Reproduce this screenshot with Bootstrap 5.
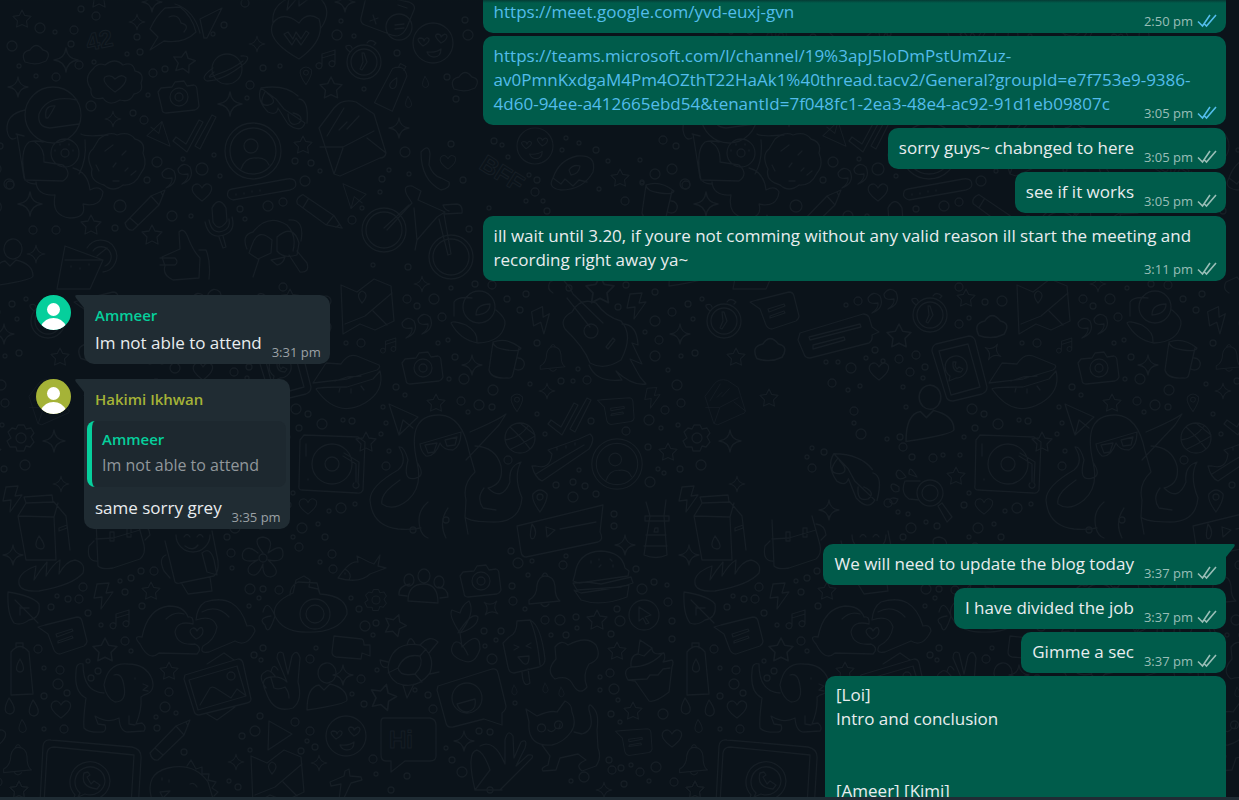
<!DOCTYPE html>
<html lang="en">
<head>
<meta charset="utf-8">
<meta name="viewport" content="width=device-width, initial-scale=1">
<title>Group chat</title>
<link href="https://cdn.jsdelivr.net/npm/bootstrap@5.3.0/dist/css/bootstrap.min.css" rel="stylesheet">
<style>
  body { background: #0b141a; color: #e9edef; font: 17px/24px "Open Sans", "Noto Sans", sans-serif; }
  .chat-window { background: #0b131a; border-bottom: 3px solid #1f2c34; }
  .chat-window::after { content: ""; position: absolute; inset: 0 0 auto; height: 3px; background: linear-gradient(rgba(11,20,26,.45), transparent); }
  .wallpaper { inset: 0; fill: none; stroke: #161e25; stroke-width: 1.3; stroke-linecap: round; stroke-linejoin: round; }
  .wallpaper text { font: 700 24px "Liberation Sans", sans-serif; stroke-width: 1; }
  .thread { padding-right: 13px; }
  .group { gap: 3px; margin-bottom: 14px; }
  .bubble { border-radius: 10px; padding: 8px 9px 9px 11px; max-width: 60vw; overflow-wrap: anywhere; }
  .sent { background: #005c4b; }
  .received { background: #202c33; }
  .wide { width: 60vw; }
  .job-list { width: 401px; padding: 7px 9px 48px 11px; }
  .clipped { padding-top: 0; border-top-left-radius: 0; border-top-right-radius: 0; }
  .bubble a { color: #53bdeb; text-decoration: none; }
  .stamp { font-size: 13px; line-height: 16px; height: 16px; margin: -11px 0 -5px; gap: 4px; color: #99beb7; white-space: nowrap; }
  .received .stamp { color: #9ba1a5; }
  .room { display: inline-block; width: 83px; }
  .received .room { width: 59px; }
  .ticks { width: 20px; height: 16px; fill: none; stroke: currentColor; stroke-width: 1.6; }
  .read { color: #53bdeb; }
  .tail { position: absolute; top: 0; width: 9px; height: 13px; }
  .received .tail { right: 100%; fill: #202c33; }
  .sent .tail { left: 100%; fill: #005c4b; }
  .tail-left { border-top-left-radius: 0; }
  .tail-right { border-top-right-radius: 0; }
  .incoming { padding-left: 36px; gap: 13px; margin-bottom: 15px; }
  .avatar { width: 35px; height: 35px; }
  .author { font-size: 15px; font-weight: 600; line-height: 24px; padding-bottom: 4px; }
  .mint { color: #06cf9c; }
  .olive { color: #a5b337; }
  .quoted { background: #1d282f; border-left: 5px solid #06cf9c; border-radius: 8px; margin: 6px -5px 9px -8px; padding: 6px 10px 10px; font-size: 16px; }
  .quoted .author { padding-bottom: 2px; }
  .quoted p { color: #91979b; }
</style>
</head>
<body>
<main class="chat-window vh-100 position-relative overflow-hidden">
  <svg class="wallpaper position-absolute w-100 h-100" aria-hidden="true">
    <defs>
      <path id="star" d="M0-10 3-4 10-3 5 2 6 9 0 6-6 9-5 2-10-3-3-4Z"/>
      <path id="spark" d="M0-10Q1-1 10 0Q1 1 0 10Q-1 1-10 0Q-1-1 0-10Z"/>
      <path id="heart" d="M0 9Q-14-1-8-7-3-10 0-4 4-11 9-6 12 0 0 9Z"/>
      <path id="drop" d="M0-8Q10 6 1 8-8 7 0-8Z"/>
      <path id="bolt" d="M-6-11 6-12 3-2 10-3-2 14-1 2-9 3Z"/>
      <path id="cloud" d="M-11 7Q-16-3-6-5 0-14 7-5 16-3 10 6Q0 11-11 7Z"/>
      <path id="note" d="M-7 6V-6L6-10V4M-7-2 6-6M-7 6a3 3 0 1 0-1 2ZM6 4a3 3 0 1 0-1 2Z"/>
      <path id="camera" d="M-17-9-6-10-3-15 6-16 9-11 16-12Q19-11 19-7L21 9Q20 12 17 13L-12 16Q-16 16-16 12L-20-5ZM10 0A9 9 0 1 1-8 0 9 9 0 1 1 10 0M5 0A4 4 0 1 1-3 0 4 4 0 1 1 5 0"/>
      <path id="bell" d="M-16 10Q-8 6-8-5-6-14 0-14 9-14 10-4 10 8 15 11L-16 14ZM-3-14q3-6 6 0M-4 14q4 5 8 0"/>
      <path id="pin" d="M0 12Q-9 0-7-6 0-14 7-6 8 0 0 12M3-3A3 3 0 1 1-3-3 3 3 0 1 1 3-3"/>
      <path id="speech" d="M-18-10 14-18Q18-18 19-14L24 6Q24 9 21 11L-3 19Q-7 19-9 15L-15-1-25-8ZM-7-1 9-6 10-4-6 2ZM-5 6 9 1 10 3-5 8Z"/>
      <path id="pencil" d="M-20 13 6-14 20-20 14-5-12 20Q-18 21-20 13M-15 8-7 15M6-14 14-5M16-18 18-14"/>
      <path id="ticks2" d="M-22 9-19 5-9 12 4-12 8-10-8 20ZM0 14 17-17 21-15 5 17Z"/>
      <path id="quote" d="M-12 8Q-5 3-6-2-16 0-16-7-11-15-4-9 1 3-12 8M4 4Q11-1 10-6 0-4 0-11 5-19 12-13 17-1 4 4"/>
      <path id="face" d="M20 0A20 20 0 1 1-20 0 20 20 0 1 1 20 0M-10 3Q-18-4-13-5-9-5-9-2-7-7-4-4-3-1-10 3M8 0Q0-7 4-9 8-9 8-6 12-11 14-7 14-3 8 0M-6 9Q3 10 8 6 8 14 1 14-4 14-6 9"/>
      <path id="profile" d="M28 0A28 28 0 1 1-28 0 28 28 0 1 1 28 0M23 0A23 23 0 1 1-23 0 23 23 0 1 1 23 0M5-5A7 7 0 1 1-9-5 7 7 0 1 1 5-5M-12 18Q-8 6 3 7 13 6 16 14"/>
      <path id="clock" d="M17 0A17 17 0 1 1-17 0 17 17 0 1 1 17 0M13 0A13 13 0 1 1-13 0 13 13 0 1 1 13 0M-2-9-1 0-4 7-2 8 3 0 0-9ZM3-19q3-5 9 0l-2 2M-14-10q-5-4-4-6 5-2 6 2"/>
      <path id="gear" d="M-3-13H3L5-9 10-10 13-5 10-1 13 4 9 9 5 8 3 13H-4L-5 9-11 9-14 3-10 0-13-6-9-10-5-9ZM5 0A5 5 0 1 1-5 0 5 5 0 1 1 5 0"/>
      <path id="mug" d="M-14-20Q0-25 14-14 13-10 0-12-14-14-14-20L-18 8Q-16 17 0 16 5 17 6 12L12-14M11-4a6 6 0 1 1-3 11"/>
      <path id="bottle" d="M-9-16Q0-27 9-16L13 26-9 27ZM-4-20V-25H3V-20M0-9Q7 3 0 4-7 3 0-9"/>
      <path id="bread" d="M-32 10Q-34-1-15-8L-17 6Q-11-4-4-12L-5 2Q2-10 9-14L8 0Q15-13 24-14 35-11 32-1 22 11-12 17-30 18-32 10Z"/>
      <path id="envelope" d="M-33-10-18-30Q-10-40 4-36L22-24 26-11 34 15Q33 20 28 20L-12 38-18 36ZM-32 9-9 9 22-7M-9 10-18 36M15 0 34 15M-25-2-8-30M-13-8-5-16M-5-9 7-22"/>
      <path id="glasses" d="M-24-20Q-29-8-17 4-8 8-7 0-2 8 3 16 16 26 20 15L-1 1-9-9ZM-20-16q-8 15 4 13 10-3-2-12M3 6q1 14 11 9 6-7-6-10M-24-20Q0-24 13-12M14-9Q24-8 22 15"/>
      <path id="map" d="M-24-22-8-15 9-28 26-21 29 14 10 23-5 17-22 27ZM-20 17 0 9 27-14M8 4 22 18M-3-4q-7-9 0-12 8 3 0 12" />
      <path id="turntable" d="M-28-29 26-27 33-22 31 26Q29 30 25 29L-30 26Q-34 26-33 21L-32-24ZM20 0A20 20 0 1 1-20 0 20 20 0 1 1 20 0M7 0A7 7 0 1 1-7 0 7 7 0 1 1 7 0M11-8 24 0 24 18M12-11 27-2 26 19a3 3 0 1 1-4 0M-26-20v12M-24 15v1"/>
      <path id="tablet" d="M-20-25 13-33Q17-33 19-29L31 18Q31 23 26 25L-3 32Q-9 32-10 27L-24-18Q-24-23-20-25M-17-18 12-25 24 18-5 26ZM11-4A11 11 0 1 0-6 7L-7 12 0 9A11 11 0 0 0 11-4M-3-7Q-4 3 5 3L7 0 3-2 1 0-1-3 0-7Z"/>
      <path id="lips" d="M-34 12-21-8-6-7Q1-18 10-15L32-6Q34-4 30-1L0 8ZM-31 18Q-30 16 0 16L26 8 33 0Q38 20 18 32-10 48-31 18M-12 10 0 6 14 5M-7 17-8 21M4 18v4M14 15l3 4"/>
      <path id="octopus" d="M-31 20Q-42-28-8-27 14-26 21 9L27 30Q14 42 18 58M-31 20Q-22 34-32 36-46 40-40 18-44 4-49 5-40 20-50 28-78 44-78 58-76 84-50 87-38 88-27 86M-31 20Q-25 45-40 58-55 70-66 62-68 54-56 44L-48 38M18 18 51-17 58-28Q50-22 22-10M27 4Q48 5 53 24 56 42 40 46 54 60 62 40 60 24 73 20 65 34 74 56 72 80 46 80 22 80 17 75L18 58M36 46Q28 56 35 66L48 68M-28 2 13-10Q13 4 5 8-5 8-8 1-13 15-22 14-27 10-28 2M-23 3-11 1-14 10-20 11ZM-3-2 9-5 7 3-1 4ZM-20 60Q-32 70-28 86-26 94-20 96M0 66q-10 14-2 30M17 75 20 92"/>
      <path id="hands" d="M-55 5Q-49-24-28-26-13-26-9-15-3-16-4-8-20-12-22 0-20 14-2 12 6 16 0 22L-38 21Q-48 30-57 12-65 3-55 5M-31-13q8-8 18-5M-1-12Q16-18 20-5 18 8 6 14 2 22 12 20L38 9Q50 16 58-1 57-8 50-6 40-40 8-30 0-25-1-12M5-20q15-8 27 5M-1 7q-10-8-3-11 3 0 4 3 5-7 6 0 0 5-7 8"/>
      <path id="dog" d="M-25-26Q-32-28-32-18-34 2-22 8-25 30-24 38-20 43-5 42-1 40-3 35L-10 34-13 26Q0 34 11 28 12 42 20 42L36 41Q39 37 34 33L28 34Q34 20 33 7L36 5Q48 2 44-11 38-26 20-26 0-28-4-5-2 8 7 12 19 12 16-4 14-18 6-15M-25-26Q-25 2-4 3M21 26v8l6 1M27-12v1M35-6l5 2-5 4 5 1"/>
      <path id="photo" d="M-32-15 21-31Q25-31 26-27L34 9Q34 12 30 13L-18 25Q-22 25-23 21L-33-11ZM-28-10 20-24 29 6-19 20ZM-17 15-7-2Q-4-4 0-1L14 8 20-1 28 5M18-14a4 4 0 1 1-8 0 4 4 0 1 1 8 0M-10-26 7-37 17-30M-10 24 0 30 18 17"/>
      <path id="burger" d="M-26 1Q-23-21 0-22 21-21 24-5L28-2 27 3-22 10-28 8ZM-28 10-14 9 0 11 30 4 32 10 20 14-24 17ZM-27 17-20 20 0 17 28 12 26 24Q0 34-20 27ZM-10-12v2M0-8l-2 2M9-14l2 2M12-8v2M-2-14v1"/>
      <path id="cupcake" d="M-22 8Q-28-2-19-5-20-17-12-18L-10-32 2-24Q2-16 14-19 16-14 13-10L22-12Q24-10 22-5L19 20Q5 31-1 29L-15 9ZM-19-5Q0-5 13-19M-12-18-6-16 2-24M-22 8-3 7 0 3 8 3 13-3 20-4"/>
      <path id="cat" d="M-34-29-23-22Q-10-28-3-26L5-37Q12-34 12-26 17-14 11-6 4 4-8 7-33 9-31-16ZM-18 7-10 18-12 27Q-20 30-17 33L-4 32 0 20 18 16 26 22Q14 27 22 33L36 28Q42 20 38 10L37-8Q39-22 35-28 28-38 29-28 36-8 22-4L14-6M-18-14a4 4 0 1 1-1 0M-1-17a4 4 0 1 1-1 0M-12-8q4 4 8-2 4 2 4-4"/>
      <path id="astronaut" d="M26-35A28 28 0 1 1-30-35 28 28 0 1 1 26-35M22-50Q-8-56-16-36-18-23-5-22L24-26M-9-32Q-11-45 0-44-3-38-7-32ZM-30-40Q-49-36-48-20-46-8-39-12M-38-16-31 28Q-28 34-19 34M-31-14-39-16M-12-8Q-20-10-26-8-36 0-30 30L8 31Q18 24 8 15L-11 12Q-10-2-20-8M-19 32Q-18 46 0 45-4 66 15 68 32 68 28 54 46 58 48 42 44 35 35 40 33 22 18 18M30-10Q32 10 24 24M26-16Q30-13 53-15M24 3A14 14 0 1 1-4 3 14 14 0 1 1 24 3M14 3A4 4 0 1 1 6 3 4 4 0 1 1 14 3M0 0v1M5-6v1M14-6v1M18 0v1"/>
      <path id="cookie" d="M-18-22Q-8-30 0-26 12-30 18-22 29-19 26-8 31 4 24 12 18 25 6 24-4 32-13 24-28 20-25 8-32-6-24-12ZM-12-10-4-16M5-6 9-10M-4 6-1 2M8 10l3-3M-18 10l-3-6M14 14l5-4M-4 20h6"/>
      <path id="bike" d="M-11 0A22 22 0 1 1-55 0 22 22 0 1 1-11 0M-15 0A18 18 0 1 1-51 0 18 18 0 1 1-15 0M56 27A22 22 0 1 1 12 27 22 22 0 1 1 56 27M52 27A18 18 0 1 1 16 27 18 18 0 1 1 52 27M-30 0-5-27-10-35Q-15-45-5-44L4-39 1-30 28-18 20-13 0 10-3-22M-33-2-8-25M0 10-2 20M22-11 31 25 34 24 27-16 45-17Q46-25 40-26L26-25Q28-20 32-19"/>
      <path id="guitar" d="M-39-34Q-46-38-42-45L-31-50-22-39-19-33 11-4M-25-29-2 0M6 4A7 7 0 1 1-8 4 7 7 0 1 1 6 4M-20-15Q-12-30 4-24 14-10 29-6 42 8 29 33 12 44-2 36-8 20-27 2-33-8-20-15M14 20l7-9 2 2-7 9ZM30-3Q45-3 46 18L40 16 50 37 38 32 48 50 54 57Q40 59 24 44L30 53Q4 56-3 38"/>
      <path id="sub" d="M-33 5Q-37-8-15-18L-12-31-4-35 2-31 1-24 10-22 12-17Q40-15 39 3 30 23-5 21-26 20-33 5M-18-16Q-18-25-10-29L9-28 12-17M22 3A15 15 0 1 1-8 3 15 15 0 1 1 22 3M16 3A9 9 0 1 1-2 3 9 9 0 1 1 16 3M-33 5q-8-19-12-4M-33 5q-7 22-10 9-8-7 6-9"/>
      <path id="flower" d="M0-5Q-12-20 0-21 12-19 5-5 20-16 20-4 20 5 5 2 20 15 8 19-1 19 0 6-6 22-14 15-18 8-5 2-24 6-20-6-15-14-5-5M4 0a4 4 0 1 1-8 0 4 4 0 1 1 8 0"/>
      <path id="badge" d="M-22-14Q-17-21-10-18 0-26 8-18 18-22 20-12 30-10 26 0 29 9 19 11 15 20 5 17-6 24-12 15-25 18-24 6-32-5-22-14M0 9Q-14-1-10-6-4-9 0-4 7-10 11-5 12 1 0 9"/>
      <path id="planet" d="M14 0A15 15 0 1 1-16 0 15 15 0 1 1 14 0M-15-1Q-29 9-21 12-5 12 17-6 24-14 13-13M-14 3Q-25 12-10 5 5 0 15-8"/>
      <path id="thumb" d="M-21 5-3-3-4-20Q1-26 6-12 11 0 17 6L16 26-10 28Q-21 23-18 14ZM-23 6H-8Q-4 10-8 13H-23M16-2H23Q28 10 26 27"/>
      <path id="mic" d="M-7-14Q0-27 7-14L8-1Q0 11-6 0ZM-14 0Q-10 18 5 13 17 9 13-5M-10-2Q-7 13 4 9 12 6 10-3M0 15 4 26 7 25 4 14"/>
      <path id="monkey" d="M-20-13Q-5-32 14-20 24-10 20 6M-20-13Q-32-10-26 4M16-25Q32-26 28-4M-21 0Q-15-18-1-5L-2 8-15 14-24 8ZM4-8Q20-22 26-2L24 10Q10 14 4 6ZM-2 15 12 12Q10 19 4 20ZM-14 14-20 32M16 10 27 27Q37 28 34 18L24 6"/>
      <path id="drink" d="M-20-10 18 4 5 33H-28ZM-20 4H18M2-8A16 16 0 1 1 18 16M8-5A10 10 0 1 1 20 10M12 0l10-8M-14 10v1M-5 12v1M4 8v1"/>
      <path id="calc" d="M-21-22 21-13Q28-10 26-5L19 12Q13 25 1 19L-23 10Q-28 8-27 3ZM24 12A13 13 0 1 1-2 12 13 13 0 1 1 24 12M7 10l9-1M7 14l9-1M-18 6l8-3M-15 0l3 9M10-10l9 3"/>
      <path id="ice" d="M-14-18Q-6-21-6-34L7-35Q18-30 22 4 22 10 16 12L-9 18Q-14 18-15 12L-20-12ZM7-35Q14-20 17 10M-9-10l5 2-5 3M8-12l-5 3 5 2M-5 2 6 1Q6 12 0 8ZM-1 17Q0 34 7 28L5 14"/>
      <path id="bag" d="M-22-26-20 20Q-16 24-5 22L22 13Q28 8 26-1L18-30M-22-7-5-8 22-16M-20 15Q-32 16-29 0L-24-5M-8-14v9h4v-9ZM9-18v9h4v-9ZM22-22q9 1 10 11l-5 5"/>
      <path id="bot" d="M-27-24-17 17Q-15 19-12 18L22 11Q27 8 26-4L20-34M18-30A17 17 0 1 1-16-30M-8-28q3-5 6 0M5-28q3-5 6 0M-7-19q8 6 13-1M-10 19-4 29 20 26 18 12M-26-10q-8 3-2 16l6 7M10-12q8-7 12 7l3 15-10-3Z"/>
      <path id="peace" d="M-17 14Q-24 0-12-1 -2-2 4 4L-6-20Q-6-28 0-25L5-4 9-22Q14-30 17-20L15 4Q20 22 10 30-10 36-17 14M-12 0-9 10Q-4 12 2 9 6 14 6 20M-17 10Q-26-2-18-6-14-10-8-2M-12-6Q-10-16-5-8"/>
      <path id="person" d="M9-20A9 10 0 1 1-9-18 9 10 0 1 1 9-20M-20 18Q-20-5-8-7L-3-2 3-8Q20-4 20 8 20 12-20 18"/>
      <path id="tulip" d="M0-2Q-12-20-8-25L0-22Q2-30 9-34 16-22 0-2M-2-2Q12-24 18-18 18-8 0-2L2 12Q20-6 20 14 15 30 4 26-14 20-6 8 0 3 8 20"/>
      <path id="team" d="M6-16A6 7 0 1 1-6-16 6 7 0 1 1 6-16M-16 9Q-16-8 0-8 14-8 14 11ZM-10-12A5 6 0 1 1-20-12 5 6 0 1 1-10-12M20-10A5 6 0 1 1 10-10 5 6 0 1 1 20-10M-17 4-25 3Q-26-6-14-8M16 6 24 5Q24-4 14-5"/>
      <path id="turtle" d="M-24 2Q-20-24 8-20 24-10 18 8 4 26-15 18-24 12-24 2M-14 3Q-8-12 8-9 12 0 3 9-12 12-14 3M8-20Q18-31 26-23L17-12M-5-20Q-2-32 3-21M-24-3-32-5Q-31 4-24 2M-9 20-5 33 2 19M18 9l9-2M-14 3-24 8M8-9l6-7M3 9l7 8"/>
      <path id="shoe" d="M-24 6Q-10 10-8-6L-12-10 19-21 30-26Q36-22 29-11L-18 21Q-25 18-28 6ZM-24 14-5 2 24-15M-3-12v2M6-14v2M15-17v2"/>
      <path id="milk" d="M-26-14-18-27 10-28 22-14 26 20M-26-14 10-13 12 30H-18ZM10-13 14-27M-20-33 8-35 9-28-18-27ZM-5 6Q4 18-3 19-12 18-5 6M15-2l8-3v3l-8 3Z"/>
      <path id="voice" d="M-43-6 43-27 40 0Q44 8 38 10L-34 25Q-38 25-39 20ZM-14-5-5-2-13 5ZM0-3 36-10M-28-8q-4 18 2 14 4-7-2-14"/>
      <path id="device" d="M-50 26-47-31Q-46-38-39-37L42-30Q52-28 51-18L47 50M-46 26-43-24Q-42-30-36-30L44-22 40 45M20 4A20 20 0 1 0-15 18L-18 26-7 22A20 20 0 0 0 20 4M15 4A15 15 0 1 0-10 16L-12 20-5 17A15 15 0 0 0 15 4M-6-4Q-10 10 7 12L10 8 4 4 1 7-3 0 0-2-2-5Z"/>
      <path id="mate" d="M-24-2-24-16Q-20-22-6-20M18-8Q28 0 27 6 24 24 0 25-18 22-27 5-26 2-12 7 0 14-1 24M17-11A16 16 0 1 1-15-11 16 16 0 1 1 17-11M-2-3Q-2-14 12-14 12-4-2-3"/>
      <path id="paw" d="M6 0A13 13 0 1 0 32 0 13 13 0 1 0 6 0M11 0A8 8 0 1 0 27 0 8 8 0 1 0 11 0M27 13l4-3 10 14-5 5ZM-5-12h14M-6-12Q-11 0-2 6L8 7M-12-6q-8-6-8 0 2 7 8 4ZM-5-16q-8-12-10-3 2 8 10 3M6-16q-8-14-8-3ZM-13 6q-9-3-8 3 5 5 8-3"/>
      <path id="leaf" d="M-15-18Q10-14 16-6 18 8 6 10-2 16-9 13-16 4-15-18M-8-10 15 13M-2-2h8M-3-3v8"/>
      <path id="blob" d="M-22-20Q-16-28-9-22 10-32 19-22 26-8 12-3 5 8 10 20 2 30-5 16-10 8-22 12-32 4-21-8Z"/>
      <path id="fish" d="M-22 6Q-10-12-2-10L-3-16 9-10 14-8 20-17 18-6 26-4 10 2Q0 12-22 6M-15-3q8 5 4 11M-15 1v1"/>
      <path id="play" d="M-9-15 14-2-10 14Z"/>
      <path id="plane" d="M-15-14 14-1-5 17ZM-5 17-1 2 9 10"/>
      <path id="fire" d="M0 31Q-34 12-26-5-16-18 0-5 8-17 20-9 27 12 0 31M-26-5Q-28-22-10-30L-12-18 0-32V-22L16-34Q36-20 22 0M-15 6-11 4-6 11-3 4 2 11 7 3 10 5 2 17-3 10-7 17Z"/>
      <path id="rocket" d="M-30 1Q-24-12-15-20L0-21Q12-12 16 4 4 16-16 13L-30 22-22 9ZM-11-11Q-2-15 1-5 10-3 4 4M-5-24Q14-18 20 5M24 10 20-9 42-20 27 10Z"/>
      <path id="donut" d="M-20 6Q-14-12 4-16 24-18 20 0 10 18-12 18-26 16-20 6M-4-2Q0-8 7-6 6 2-2 3ZM-20 6-12 12-8 7 0 14 6 8 14 10"/>
      <path id="dino" d="M-30 20Q-38-6-14-12 12-18 26 2L32 22M5-14 9-20 14-11 20-13 20-6 27-6 26 0 34 2 30 8 36 12 32 16M-20-2v2M-13 0v2M8 4q4-2 7 3M-22 12l10-1-7 7Z"/>
      <path id="jet" d="M-15-3-1-9 0-14 4-16 5-9 16-8 17-5 6-2-2 15-6 15-4-1-14 1Z"/>
      <path id="handset" d="M-12-16Q-4-25-3-14L-4-3Q0 8 8 10L16 14Q18 20 8 22-12 12-12-16"/>
      <path id="light" d="M-12-28-8-14H6L8-30M-8-14-14 25Q-2 30 9 25L6-14M-13-9H11V-14H-13ZM-12 5H8M-14 16H9M-3-2h3v4h-4Z"/>
      <g id="tile"></g>
    </defs>
  </svg>

  <div class="thread position-relative d-flex flex-column">
    <div class="group d-flex flex-column align-items-end">
      <div class="bubble sent wide clipped"><a href="https://meet.google.com/yvd-euxj-gvn">https://meet.google.com/yvd-euxj-gvn</a><span class="room"></span><div class="stamp d-flex justify-content-end">2:50 pm <svg class="ticks read" viewBox="0 0 20 16"><path d="M1 8.500 5.500 13 13 2M7 10.500 9.500 13 19 2"/></svg></div></div>
      <div class="bubble sent wide"><a href="#teams">https://teams.microsoft.com/l/channel/19%3apJ5IoDmPstUmZuz-av0PmnKxdgaM4Pm4OZthT22HaAk1%40thread.tacv2/General?groupId=e7f753e9-9386-4d60-94ee-a412665ebd54&amp;tenantId=7f048fc1-2ea3-48e4-ac92-91d1eb09807c</a><span class="room"></span><div class="stamp d-flex justify-content-end">3:05 pm <svg class="ticks read" viewBox="0 0 20 16"><path d="M1 8.500 5.500 13 13 2M7 10.500 9.500 13 19 2"/></svg></div></div>
      <div class="bubble sent">sorry guys~ chabnged to here<span class="room"></span><div class="stamp d-flex justify-content-end">3:05 pm <svg class="ticks" viewBox="0 0 20 16"><path d="M1 8.500 5.500 13 13 2M7 10.500 9.500 13 19 2"/></svg></div></div>
      <div class="bubble sent">see if it works<span class="room"></span><div class="stamp d-flex justify-content-end">3:05 pm <svg class="ticks" viewBox="0 0 20 16"><path d="M1 8.500 5.500 13 13 2M7 10.500 9.500 13 19 2"/></svg></div></div>
      <div class="bubble sent">ill wait until 3.20, if youre not comming without any valid reason ill start the meeting and recording right away ya~<span class="room"></span><div class="stamp d-flex justify-content-end">3:11 pm <svg class="ticks" viewBox="0 0 20 16"><path d="M1 8.500 5.500 13 13 2M7 10.500 9.500 13 19 2"/></svg></div></div>
    </div>

    <div class="incoming d-flex align-items-start">
      <svg class="avatar rounded-circle" viewBox="0 0 35 35"><rect width="35" height="35" fill="#06cf9c"/><circle cx="17.500" cy="14.500" r="6.500" fill="#fff"/><path d="M5 31Q9 23 17.500 23T30 31Q25 35 17.500 35T5 31" fill="#fff"/></svg>
      <div class="bubble received tail-left position-relative">
        <svg class="tail" viewBox="0 0 9 13"><path d="M9 0H2Q-1 0 1 3L9 13Z"/></svg>
        <div class="author mint">Ammeer</div>
        Im not able to attend<span class="room"></span><div class="stamp d-flex justify-content-end">3:31 pm</div>
      </div>
    </div>

    <div class="incoming d-flex align-items-start">
      <svg class="avatar rounded-circle" viewBox="0 0 35 35"><rect width="35" height="35" fill="#a5b337"/><circle cx="17.500" cy="14.500" r="6.500" fill="#fff"/><path d="M5 31Q9 23 17.500 23T30 31Q25 35 17.500 35T5 31" fill="#fff"/></svg>
      <div class="bubble received tail-left position-relative">
        <svg class="tail" viewBox="0 0 9 13"><path d="M9 0H2Q-1 0 1 3L9 13Z"/></svg>
        <div class="author olive">Hakimi Ikhwan</div>
        <div class="quoted"><div class="author mint">Ammeer</div><p class="m-0">Im not able to attend</p></div>
        same sorry grey<span class="room"></span><div class="stamp d-flex justify-content-end">3:35 pm</div>
      </div>
    </div>

    <div class="group d-flex flex-column align-items-end">
      <div class="bubble sent tail-right position-relative"><svg class="tail" viewBox="0 0 9 13"><path d="M0 0H7Q10 0 8 3L0 13Z"/></svg>We will need to update the blog today<span class="room"></span><div class="stamp d-flex justify-content-end">3:37 pm <svg class="ticks" viewBox="0 0 20 16"><path d="M1 8.500 5.500 13 13 2M7 10.500 9.500 13 19 2"/></svg></div></div>
      <div class="bubble sent">I have divided the job<span class="room"></span><div class="stamp d-flex justify-content-end">3:37 pm <svg class="ticks" viewBox="0 0 20 16"><path d="M1 8.500 5.500 13 13 2M7 10.500 9.500 13 19 2"/></svg></div></div>
      <div class="bubble sent">Gimme a sec<span class="room"></span><div class="stamp d-flex justify-content-end">3:37 pm <svg class="ticks" viewBox="0 0 20 16"><path d="M1 8.500 5.500 13 13 2M7 10.500 9.500 13 19 2"/></svg></div></div>
      <div class="bubble sent job-list">[Loi]<br>Intro and conclusion<br><br><br>[Ameer] [Kimi]</div>
    </div>
  </div>
</main>

<script src="https://cdn.jsdelivr.net/npm/bootstrap@5.3.0/dist/js/bootstrap.bundle.min.js"></script>
<script>
  // Doodle wallpaper: each entry is "x y [scale] [angle]" inside one repeat of the pattern.
  const repeat = 676;
  const doodles = {
    star: '22 19 .9;184 62 1.1 10;331 88 1.1;303 145 .9;91 225;152 235;99 -2;151 591 .9;105 650 1.2;169 671 .9;597 620;617 651 .9;633 711 .9;600 290 1.4;436 403 .9;60 357 .9;93 398 .9;223 336 1.2;290 298 .9;280 476 .9;366 442;668 452 .9;620 178 .9;19 790 .9;695 790 .9;395 625 1.1 20;383 697 1.3 15',
    spark: '66 60 1.2;18 87;137 22 .8;257 44 .8;30 204 1.2;113 119 .8;230 104 1.2;399 128;152 2;345 2;36 254 .9;13 555;491 608 .9 40;625 545;464 741;236 762 .8;319 763 .8;472 365;547 391 .8;4 334;54 441 1.1;61 484 .8;317 352 .9 30;153 510;604 790 .8;422 284 .8;343 675',
    heart: '202 192;61 709;672 738;203 371;308 506 .9;448 162 .8',
    drop: '425 82 .7;408 102 .7;9 706;33 708;22 726 .8;514 690 .6;545 688 .6;561 692 .6',
    bolt: '103 595;541 320 1 -20;636 305;652 397 .8;12 498;',
    cloud: '36 55;316 327 1.2;465 82;94 350 1.2',
    note: '329 60;123 620;391 346 .8', camera: '178 97;480 581;422 368', bell: '18 760 .9;545 590;553 358 .8',
    pin: '306 75 .8;517 402 .8;540 500', speech: '63 635;616 410 .8 10;634 741 .8 10;99 310;', pencil: '145 210;170 740;319 212 1 80',
    ticks2: '195 132;570 415', quote: '418 330;208 305;178 180', face: '433 43;346 736;535 146 .9', profile: '253 151;617 464 .9',
    clock: '364 62;254 315;48 321', gear: '376 600 .8;21 438', mug: '507 362;660 205', bottle: '20 668;393 85 .9 28', bread: '51 574',
    envelope: '352 138;49 402 .6', glasses: '285 108;180 480 1.1 10', map: '365 307;275 778', turntable: '332 464', tablet: '280 369', lips: '347 371',
    octopus: '448 442', hands: '197 632', dog: '108 690', photo: '217 690', burger: '601 573', cupcake: '650 672', cat: '560 738', astronaut: '55 150',
    cookie: '117 161', bike: '417 230', guitar: '592 327', sub: '308 611', flower: '263 558', badge: '115 83', planet: '228 69', thumb: '183 252',
    mic: '219 222', monkey: '273 245', drink: '85 256', calc: '388 15', ice: '523 655', bag: '118 546', bot: '192 565', peace: '283 678', person: '327 692;254 420 1.2;13 268',
    tulip: '460 635', team: '424 592', turtle: '412 665', shoe: '560 460', milk: '44 530', voice: '560 532', device: '90 777', mate: '478 318', paw: '235 493',
    leaf: '23 610', blob: '577 667', fish: '360 572', play: '278 736', plane: '404 418;355 195 .8;158 135 .8 180', fire: '299 28', rocket: '180 28', donut: '573 172',
    dino: '182 780', jet: '345 785', handset: '433 168', light: '658 530'
  };
  const rings = '12 46 5;40 28 5;74 30 4;81 9 3;96 16 4;55 32 2;71 44 3;127 54 2;140 52 3;137 37 3;153 73 4;165 69 3;79 65 4;94 62 2;56 77 4;36 76 2;19 66 2;91 106 5;133 113 3;144 120 4;148 95 2;157 162 5;183 159 2;202 169 6;147 180 3;214 155 2;220 176 2;120 206 6;172 216 5;191 216 2;56 230 4;115 228 3;33 230 4;10 185 4;240 209 3;268 206 5;283 202 4;245 219 2;305 181 5;295 161 3;311 163 3;320 171 2;352 220 4;380 192 2;382 179 3;405 152 5;389 170 2;409 174 2;362 208 2;245 3 4;224 25 3;213 34 2;263 68 3;250 85 4;247 98 2;280 66 2;337 35 5;341 21 2;354 36 2;397 53 3;447 77 3;456 99 3;465 20 3;468 35 5;451 144 3;463 180 3;364 89 2;469 229 3;373 265 2;408 267 3;227 537 3;231 553 4;232 568 2;141 571 3;154 571 4;120 581 2;131 578 3;83 587 4;125 592 3;57 596 2;68 599 3;79 599 4;51 607 3;142 606 3;88 613 3;101 625 2;125 641 4;131 651 2;38 649 4;44 668 2;60 670 4;58 684 5;67 693 3;44 696 3;88 661 2;98 671 3;91 678 3;169 692 4;165 707 5;176 713 2;156 717 2;64 729 4;44 729 2;157 728 3;184 752 3;250 589 5;263 589 3;279 590 4;249 606 2;259 598 2;263 648 3;254 655 3;261 660 2;316 648 2;310 659 4;361 679 4;377 670 2;352 694 2;364 704 3;260 716 3;295 722 4;255 731 5;242 736 3;310 731 4;307 741 2;315 747 3;301 751 3;250 750 2;373 759 4;376 774 2;391 790 3;407 776 3;229 781 2;238 787 3;293 537 2;299 547 4;320 562 2;332 554 4;333 569 4;351 598 2;359 609 3;365 626 5;376 623 3;373 635 2;325 537 3;511 551 3;518 563 5;532 561 2;528 575 2;563 565 4;566 556 2;512 586 3;513 601 4;525 609 2;545 620 4;560 620 5;576 617 3;577 628 2;566 635 3;551 635 2;501 631 3;484 631 3;496 640 2;485 646 2;492 659 5;636 569 3;642 589 5;654 582 3;667 585 2;668 602 4;617 609 3;620 621 5;611 634 3;672 621 3;672 639 3;610 673 4;614 689 5;600 677 2;600 690 2;618 700 2;611 714 3;663 714 5;620 722 2;479 731 3;490 732 3;446 748 2;452 760 3;462 772 5;609 760 3;612 770 4;621 768 3;631 765 2;640 772 4;656 767 5;674 782 4;649 781 2;584 777 5;571 781 2;624 784 3;415 690 2;428 695 3;433 709 4;515 703 2;407 299 4;434 299 5;417 306 3;442 317 4;451 288 2;475 284 3;492 285 4;507 299 3;520 310 3;526 294 3;569 288 3;618 307 3;626 285 3;655 292 3;655 321 5;672 312 4;688 304 3;693 319 2;702 299 2;645 332 2;659 340 4;655 356 5;668 370 2;681 356 2;677 385 5;681 403 4;665 410 4;649 420 5;661 428 2;678 425 2;695 353 3;537 343 3;455 357 3;464 379 5;449 379 2;396 387 3;405 395 2;346 343 2;361 343 4;438 343 2;448 340 2;493 390 5;530 384 2;561 381 3;573 381 2;587 380 4;578 369 2;461 401 4;479 405 5;492 407 3;468 412 2;537 414 2;591 421 3;626 431 4;545 434 2;508 460 4;383 407 2;386 423 2;381 434 2;389 451 2;386 466 4;650 482 5;648 447 3;658 469 2;664 473 2;680 469 3;701 465 5;579 470 2;556 485 3;573 482 3;585 486 3;596 494 3;573 497 5;614 514 3;614 526 3;182 301 4;170 305 2;283 287 4;309 302 3;326 301 5;283 324 4;293 318 2;199 350 3;190 358 2;207 361 2;223 359 4;240 355 4;234 372 4;249 367 3;247 378 2;175 368 5;150 362 2;162 362 2;156 383 4;172 390 2;184 386 2;227 387 2;178 411 4;178 423 2;185 434 5;211 439 2;224 437 3;227 447 4;236 457 3;257 458 4;267 455 2;284 455 2;288 437 2;299 428 3;296 409 5;308 414 3;322 424 5;343 420 2;352 421 3;230 407 2;136 448 2;148 452 3;131 457 2;136 468 4;212 503 4;222 512 2;232 514 2;250 522 2;261 526 3;235 528 5;288 505 3;293 493 2;329 511 2;341 508 5;355 504 2;302 528 5;318 524 2;502 145 2;508 157 2;494 141 3;562 150 2;566 138 2;579 143 2;596 150 3;608 161 2;529 175 2;537 180 3;535 192 4;526 201 2;543 201 2;599 189 2;642 182 2;655 174 5;672 169 5;640 160 2;663 140 4;676 146 3;625 201 4;642 183 2;685 184 5;489 208 2;547 211 3;413 530 3;446 520 3;490 790 3';

  const ns = 'http://www.w3.org/2000/svg';
  const tile = document.getElementById('tile');
  const add = (parent, tag, attributes) => {
    const node = document.createElementNS(ns, tag);
    for (const key in attributes) node.setAttribute(key, attributes[key]);
    return parent.appendChild(node);
  };
  for (const name in doodles) {
    for (const entry of doodles[name].split(';').filter(Boolean)) {
      const [x, y, scale = 1, angle = 0] = entry.split(' ');
      add(tile, 'use', { href: '#' + name, transform: `translate(${x} ${y}) rotate(${angle}) scale(${scale})` });
    }
  }
  for (const entry of rings.split(';')) {
    const [cx, cy, r] = entry.split(' ');
    add(tile, 'circle', { cx, cy, r });
  }
  add(tile, 'path', { d: 'M228 192Q226 198 233 200L290 190Q298 188 295 181 293 178 287 179L232 189Q228 190 228 192M236 194v1M244 193v1M252 191v1M260 190v1M384 718H430Q436 719 436 725V756Q436 761 430 761H405L391 772V761H386Q381 761 381 755V722Q381 718 384 718M438 686 492 669Q497 668 498 673L506 706Q506 710 502 713L502 725 484 719 453 727Q447 728 446 723L437 690ZM482 698A15 15 0 1 1 452 698 15 15 0 1 1 482 698M457 704 475 699Q477 711 466 712 459 711 457 704M659 615A15 15 0 1 1 629 615 15 15 0 1 1 659 615M639 607 651 615 645 617 649 623 646 624 643 618 639 621ZM535 438A15 15 0 1 1 505 438 15 15 0 1 1 535 438M510 427Q522 438 530 449M520 423 535 435M505 440Q520 438 528 426M511 449Q522 444 535 436M124 333 187 314Q191 314 193 317L196 327 203 332 196 335Q197 340 193 343L134 358Q129 358 128 354L122 340ZM133 337 184 324 185 327 134 340ZM137 345 168 337 169 340 137 349ZM334 636 362 639Q364 640 364 645L370 645V656L362 653 361 659 336 657Q332 656 332 652ZM475 790Q466 752 477 750 484 752 490 770 L475 790M480 746Q494 738 505 764L505 740Q508 728 513 736L514 758 521 742Q528 738 525 748L516 766 528 755Q534 754 532 758L500 790M475 790H502' });
  const word = (text, x, y, angle) => add(tile, 'text', { transform: `translate(${x} ${y}) rotate(${angle})` }).textContent = text;
  word('42', 88, 51, -12);
  word('Hi', 389, 748, 0);
  word('BFF', 478, 168, 32);
  const wallpaper = document.querySelector('.wallpaper');
  for (let x = -repeat; x < Math.max(innerWidth, 2000); x += repeat) add(wallpaper, 'use', { href: '#tile', x });
</script>
</body>
</html>
